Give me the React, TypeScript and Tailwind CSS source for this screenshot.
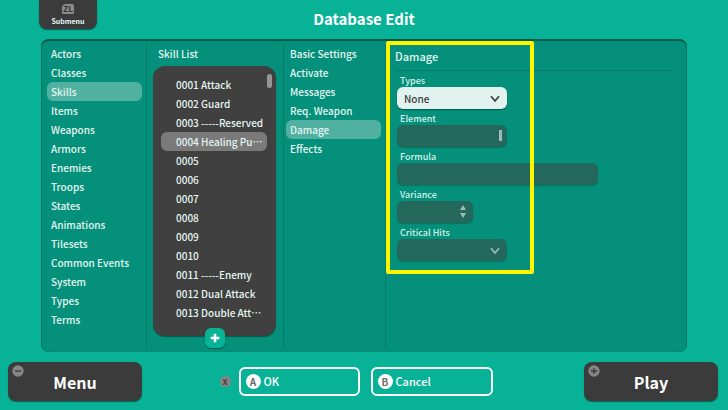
import React, { useState } from "react";

const CATEGORIES = [
  "Actors",
  "Classes",
  "Skills",
  "Items",
  "Weapons",
  "Armors",
  "Enemies",
  "Troops",
  "States",
  "Animations",
  "Tilesets",
  "Common Events",
  "System",
  "Types",
  "Terms",
];

const SKILLS = [
  "0001 Attack",
  "0002 Guard",
  "0003 -----Reserved",
  "0004 Healing Pu⋯",
  "0005",
  "0006",
  "0007",
  "0008",
  "0009",
  "0010",
  "0011 -----Enemy",
  "0012 Dual Attack",
  "0013 Double Att⋯",
];

const SECTIONS = ["Basic Settings", "Activate", "Messages", "Req. Weapon", "Damage", "Effects"];

const FIELD = "block h-[22px] w-full appearance-none rounded-md px-[7px] text-[10px] font-medium outline-none";
const FIELD_DARK = "bg-[#24685c] text-[#a9c9c1] shadow-[0_1px_1px_#047563]";

type MenuListProps = {
  items: string[];
  selected: string;
  onSelect: (item: string) => void;
};

function MenuList({ items, selected, onSelect }: MenuListProps) {
  return (
    <ul>
      {items.map((item) => (
        <li key={item}>
          <button
            type="button"
            onClick={() => onSelect(item)}
            className={`block h-[19px] w-full whitespace-nowrap rounded-md px-1 text-left leading-[19px] ${
              item === selected ? "bg-[#50b1a1]" : ""
            }`}
          >
            {item}
          </button>
        </li>
      ))}
    </ul>
  );
}

type FieldProps = {
  id: string;
  label: string;
  width: string;
  children: React.ReactNode;
};

function Field({ id, label, width, children }: FieldProps) {
  return (
    <div className={width}>
      <label htmlFor={id} className="block h-4 pl-[3px] text-[9px] font-medium leading-[20px] whitespace-nowrap text-[#d9f0eb]">
        {label}
      </label>
      <div className="relative">{children}</div>
    </div>
  );
}

function Chevron({ className }: { className: string }) {
  return (
    <svg viewBox="0 0 10 8" className={`pointer-events-none absolute top-2 right-[7px] h-2 w-2.5 ${className}`}>
      <path d="M1 1.2 L5 6 L9 1.2" fill="none" stroke="currentColor" strokeWidth="1.7" />
    </svg>
  );
}

export default function App() {
  const [category, setCategory] = useState("Skills");
  const [skill, setSkill] = useState(SKILLS[3]);
  const [section, setSection] = useState("Damage");

  return (
    <div lang="ja" className="min-h-screen bg-[#07b297] font-['Noto_Sans_CJK_JP',sans-serif] text-[10px] font-medium text-[#e4f5f1]">
      {/* Header */}
      <header className="grid h-[39px] grid-cols-[1fr_auto_1fr] px-[39px]">
        <button
          type="button"
          className="flex h-[29px] w-[58px] flex-col items-center rounded-b-lg bg-[#3b3b3b] pt-1 shadow-[0_1px_1px_#08614f]"
        >
          <span className="h-2.5 w-3 rounded-tl-[4px] rounded-tr-[2px] rounded-b-[1px] bg-[#8a8a8a] text-center text-[8px] font-bold leading-[10px] text-[#333]">
            ZL
          </span>
          <span className="text-[7px] font-bold leading-[14px]">Submenu</span>
        </button>
        <h1 className="text-[15px] font-bold leading-[38px] text-white">Database Edit</h1>
      </header>

      {/* Editor panel */}
      <main className="mx-[41px] flex rounded-lg bg-[#04907a] pt-[5px] pb-1 shadow-[inset_0_2px_1px_#04594b,inset_-1px_0_1px_#067c69,inset_1px_0_1px_#067c69]">
        <nav className="w-[106px] border-r border-[#047c69] pr-1 pl-1.5">
          <MenuList items={CATEGORIES} selected={category} onSelect={setCategory} />
        </nav>

        <section className="w-[137px] border-r border-[#047c69] pr-[7px] pl-1.5">
          <h2 className="h-[22px] pl-[5px] leading-5">Skill List</h2>
          <div className="flex h-[270px] rounded-xl bg-[#404040] pt-[9px] pl-2 shadow-[0_1px_1px_#04594b]">
            <ul className="w-[106px]">
              {SKILLS.map((item) => (
                <li key={item}>
                  <button
                    type="button"
                    onClick={() => setSkill(item)}
                    className={`block h-[19px] w-full rounded-md pl-[15px] text-left leading-[19px] whitespace-nowrap ${
                      item === skill ? "bg-[#7a7a7a]" : ""
                    }`}
                  >
                    {item}
                  </button>
                </li>
              ))}
            </ul>
            <div className="-mt-px h-3.5 w-[5px] rounded-sm bg-[#969696]" />
          </div>
          <button
            type="button"
            aria-label="Add skill"
            className="relative mx-auto -mt-2 flex h-5 w-5 items-center justify-center rounded-md bg-[#07b297] shadow-[0_1px_1px_#04594b]"
          >
            <svg viewBox="0 0 10 10" className="h-2.5 w-2.5">
              <path d="M5 0.7 V9.3 M0.7 5 H9.3" stroke="#fff" strokeWidth="2.6" />
            </svg>
          </button>
        </section>

        <nav className="w-[102px] border-r border-[#047c69] pr-1 pl-[2px]">
          <MenuList items={SECTIONS} selected={section} onSelect={setSection} />
        </nav>

        <section className="relative flex-1 pr-[15px] pl-[9px]">
          <h2 className="h-[27px] border-b border-[#047c69] text-[11px] leading-[24px]">Damage</h2>
          <form className="pl-0.5">
            <Field id="types" label="Types" width="w-[110px]">
              <select
                id="types"
                defaultValue="None"
                className={`${FIELD} bg-[#e2f3ef] text-[#3b3b3b] shadow-[0_1px_1px_#04594b]`}
              >
                <option>None</option>
              </select>
              <Chevron className="text-[#3b3b3b]" />
            </Field>
            <Field id="element" label="Element" width="w-[110px]">
              <select id="element" className={`${FIELD} ${FIELD_DARK}`} />
              <span className="pointer-events-none absolute top-[5px] right-[5px] h-[11px] w-[3px] bg-[#9dbdb6]" />
            </Field>
            <Field id="formula" label="Formula" width="w-[201px]">
              <input id="formula" type="text" className={`${FIELD} ${FIELD_DARK}`} />
            </Field>
            <Field id="variance" label="Variance" width="w-[76px]">
              <input id="variance" type="text" className={`${FIELD} ${FIELD_DARK}`} />
              <svg viewBox="0 0 6 13" className="pointer-events-none absolute top-1 right-[7px] h-[13px] w-1.5">
                <path d="M3 0 L6 5 H0 Z M3 13 L6 8 H0 Z" fill="#9dbdb6" />
              </svg>
            </Field>
            <Field id="critical" label="Critical Hits" width="w-[110px]">
              <select id="critical" className={`${FIELD} ${FIELD_DARK}`} />
              <Chevron className="text-[#9dbdb6]" />
            </Field>
          </form>
          {/* Highlight frame over the damage settings */}
          <div className="pointer-events-none absolute -top-[3px] left-0 h-[233px] w-[148px] rounded-xs border-4 border-[#fff500]" />
        </section>
      </main>

      {/* Footer */}
      <footer className="flex items-center justify-between pt-2.5 pr-2.5 pb-2 pl-2 text-white">
        <button
          type="button"
          className="relative h-[39px] w-[134px] rounded-lg bg-[#3b3b3b] text-[16px] font-bold leading-[38px] shadow-[0_1px_1px_#08614f]"
        >
          <svg viewBox="0 0 12 12" className="absolute top-[3px] left-1 h-3 w-3">
            <circle cx="6" cy="6" r="5.7" fill="#858585" />
            <path d="M3 6 H9" stroke="#3b3b3b" strokeWidth="1.3" />
          </svg>
          Menu
        </button>

        <div className="flex items-center text-[11px]">
          <span className="mr-2 flex h-[11px] w-[11px] items-center justify-center rounded-full bg-[#858585] text-[8px] font-bold leading-none text-[#3b3b3b]">
            X
          </span>
          <button
            type="button"
            className="mr-[11px] flex h-[29px] w-[121px] items-center gap-[3px] rounded-md border-2 border-white pl-[5px]"
          >
            <span className="flex h-[15px] w-[15px] items-center justify-center rounded-full bg-white text-[10px] font-bold leading-none text-[#6b6b6b]">
              A
            </span>
            OK
          </button>
          <button
            type="button"
            className="mr-3.5 flex h-[29px] w-[122px] items-center gap-[3px] rounded-md border-2 border-white pl-[5px]"
          >
            <span className="flex h-[15px] w-[15px] items-center justify-center rounded-full bg-white text-[10px] font-bold leading-none text-[#6b6b6b]">
              B
            </span>
            Cancel
          </button>
        </div>

        <button
          type="button"
          className="relative h-[39px] w-[134px] rounded-lg bg-[#3b3b3b] text-[16px] font-bold leading-[38px] shadow-[0_1px_1px_#08614f]"
        >
          <svg viewBox="0 0 12 12" className="absolute top-[3px] left-1 h-3 w-3">
            <circle cx="6" cy="6" r="5.7" fill="#858585" />
            <path d="M3 6 H9 M6 3 V9" stroke="#3b3b3b" strokeWidth="1.3" />
          </svg>
          Play
        </button>
      </footer>
    </div>
  );
}
